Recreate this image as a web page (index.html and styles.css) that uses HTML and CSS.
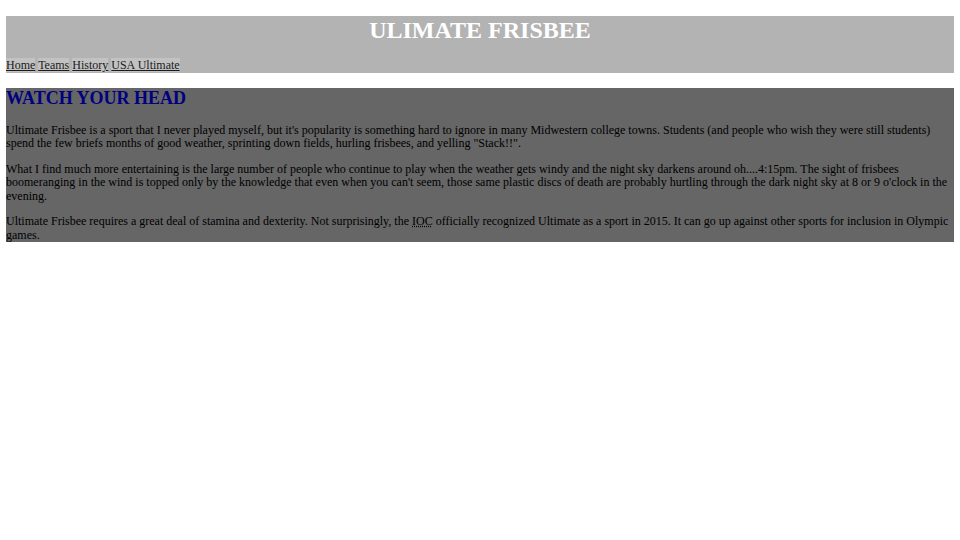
FILE: index.html
```html
<!DOCTYPE html>
<html>
<head>
<meta charset="utf-8">
<title>Ultimate Frisbee</title>
<link rel="stylesheet" href="styles.css">
</head>
<body>
<header class="site-header">
  <h1 class="title">ULIMATE FRISBEE</h1>
  <nav class="nav">
    <a href="#" class="nav-link">Home</a>
    <a href="#" class="nav-link">Teams</a>
    <a href="#" class="nav-link">History</a>
    <a href="#" class="nav-link">USA Ultimate</a>
  </nav>
</header>
<main class="content">
  <h2 class="heading">WATCH YOUR HEAD</h2>
  <p class="para">Ultimate Frisbee is a sport that I never played myself, but it's popularity is something hard to ignore in many Midwestern college towns. Students (and people who wish they were still students) spend the few briefs months of good weather, sprinting down fields, hurling frisbees, and yelling "Stack!!".</p>
  <p class="para">What I find much more entertaining is the large number of people who continue to play when the weather gets windy and the night sky darkens around oh....4:15pm. The sight of frisbees boomeranging in the wind is topped only by the knowledge that even when you can't seem, those same plastic discs of death are probably hurtling through the dark night sky at 8 or 9 o'clock in the evening.</p>
  <p class="para">Ultimate Frisbee requires a great deal of stamina and dexterity. Not surprisingly, the <abbr class="abbr" title="International Olympic Committee">IOC</abbr> officially recognized Ultimate as a sport in 2015. It can go up against other sports for inclusion in Olympic games.</p>
</main>
</body>
</html>
```
FILE: styles.css
```css
html {
  margin: 0;
  padding: 0;
}
body {
  margin: 0 6px;
  padding-top: 16px;
  font-family: "Liberation Serif", "Times New Roman", serif;
  font-size: 12px;
  line-height: 13.5px;
  color: #000;
  background: #fff;
}
.site-header {
  background: #b3b3b3;
}
.title {
  margin: 0;
  padding: 0;
  height: 43px;
  font-size: 24px;
  line-height: 28px;
  font-weight: bold;
  color: #fff;
  text-align: center;
}
.nav {
  line-height: 13.5px;
}
.nav-link {
  color: #1a1a1a;
  background: #c2c2c2;
}
.content {
  margin-top: 15px;
  background: #666666;
}
.heading {
  margin: 0 0 15px;
  font-size: 18px;
  line-height: 21px;
  font-weight: bold;
  color: #000080;
}
.para {
  margin: 12px 0;
}
.abbr {
  text-decoration: underline dotted;
}
```
